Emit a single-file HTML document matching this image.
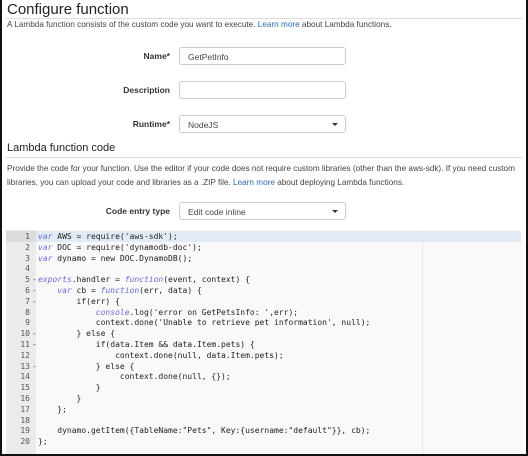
<!DOCTYPE html>
<html><head><style>
*{margin:0;padding:0;box-sizing:border-box}
body{width:528px;height:456px;background:#fff;font-family:"Liberation Sans",sans-serif;color:#333;position:relative;overflow:hidden}
.frame{position:absolute;left:0;top:0;width:528px;height:456px;border-left:2px solid #111;border-right:2px solid #111;border-bottom:2px solid #111}
.a{position:absolute;white-space:nowrap}
h1{position:absolute;left:7px;top:1px;font-size:15px;font-weight:normal;color:#222}
h2{position:absolute;left:7px;top:142px;font-size:11px;font-weight:normal;color:#222}
.hr{position:absolute;left:6px;right:6px;height:1px;background:#ddd}
.p{font-size:8.2px;color:#444}
.lnk{color:#2a6bb0}
.lbl{font-size:8.5px;font-weight:bold;color:#333;text-align:right;width:160px;left:10px}
.inp{position:absolute;left:179px;width:167px;height:18px;border:1px solid #ccc;border-radius:3px;background:#fff;font-size:8.5px;padding:4px 0 0 8px;color:#444}
.inp.sel:after{content:"";position:absolute;right:7px;top:7px;border-left:3px solid transparent;border-right:3px solid transparent;border-top:3px solid #333}
.code{position:absolute;left:6px;top:230px;width:515px;height:224px;background:#f9f9f9}
.gut{position:absolute;left:0;top:0;width:30px;height:224px;background:#ebebeb}
.pm{position:absolute;left:416px;top:0;width:1px;height:224px;background:#e6e6e6}
.act{position:absolute;left:30px;top:1px;width:485px;height:11px;background:#e2eaf5}
.actg{position:absolute;left:0;top:1px;width:30px;height:11px;background:#dcdcdc}
.ln{position:absolute;left:0;width:24px;text-align:right;font-family:"DejaVu Sans Mono",monospace;font-size:8px;color:#555}
.cl{position:absolute;left:32px;font-family:"DejaVu Sans Mono",monospace;font-size:8px;color:#222;white-space:pre}
.k{color:#6b6bd6;font-style:italic}
</style></head><body>
<h1>Configure function</h1>
<div class="hr" style="top:18px"></div>
<div class="a p" style="left:7px;top:20px">A Lambda function consists of the custom code you want to execute. <span class="lnk">Learn more</span> about Lambda functions.</div>
<div class="a lbl" style="top:51px">Name*</div>
<div class="inp" style="top:47px">GetPetInfo</div>
<div class="a lbl" style="top:85px">Description</div>
<div class="inp" style="top:81px"></div>
<div class="a lbl" style="top:119px">Runtime*</div>
<div class="inp sel" style="top:115px">NodeJS</div>
<h2>Lambda function code</h2>
<div class="hr" style="top:157px"></div>
<div class="a p" style="left:7px;top:162px;line-height:14px">Provide the code for your function. Use the editor if your code does not require custom libraries (other than the aws-sdk). If you need custom<br>libraries, you can upload your code and libraries as a .ZIP file. <span class="lnk">Learn more</span> about deploying Lambda functions.</div>
<div class="a lbl" style="top:206px">Code entry type</div>
<div class="inp sel" style="top:202px">Edit code inline</div>
<div class="code">
<div class="gut"></div><div class="pm"></div><div class="act"></div><div class="actg"></div>
<div id="c"></div>
</div>
<div class="frame"></div>
<script>
var L=[
'<span class="k">var</span> AWS = require(\'aws-sdk\');',
'<span class="k">var</span> DOC = require(\'dynamodb-doc\');',
'<span class="k">var</span> dynamo = new DOC.DynamoDB();',
'',
'<span class="k">exports</span>.handler = <span class="k">function</span>(event, context) {',
'    <span class="k">var</span> cb = <span class="k">function</span>(err, data) {',
'        if(err) {',
'            <span class="k">console</span>.log(\'error on GetPetsInfo: \',err);',
'            context.done(\'Unable to retrieve pet information\', null);',
'        } else {',
'            if(data.Item &amp;&amp; data.Item.pets) {',
'                context.done(null, data.Item.pets);',
'            } else {',
'                 context.done(null, {});',
'            }',
'        }',
'    };',
'',
'    dynamo.getItem({TableName:"Pets", Key:{username:"default"}}, cb);',
'};'];
var f=[5,6,7,10,11,13],h='';
for(var i=0;i<L.length;i++){var t=2+i*10.8;
h+='<div class="ln" style="top:'+t+'px">'+(i+1)+(f.indexOf(i+1)>=0?'<span style="position:absolute;left:26px">-</span>':'')+'</div><div class="cl" style="top:'+t+'px">'+L[i]+'</div>';}
document.getElementById('c').innerHTML=h;
</script>
</body></html>
